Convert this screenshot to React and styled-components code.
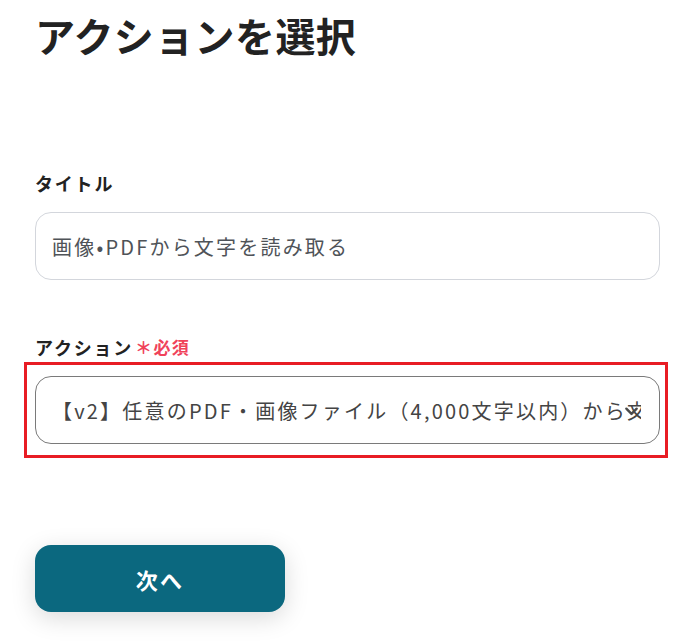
import styled, { createGlobalStyle } from 'styled-components'

const GlobalStyle = createGlobalStyle`
	body {
		margin: 0;
		background: #ffffff;
		font-family: "Noto Sans CJK JP", "Noto Sans", sans-serif;
		color: #222;
	}
`

function App() {
	return (
		<Page>
			<GlobalStyle />
			<Heading>アクションを選択</Heading>
			<Field>
				<Label>タイトル</Label>
				<TextBox>画像•PDFから文字を読み取る</TextBox>
			</Field>
			<Field $gap={54}>
				<Label>
					アクション
					<Required>＊必須</Required>
				</Label>
				<Highlight>
					<SelectBox>
						<SelectText>【v2】任意のPDF・画像ファイル（4,000文字以内）から文字を読み取る</SelectText>
						<Chevron viewBox="0 0 16 16">
							<path d="M2.5 5 L8 10.5 L13.5 5" fill="none" stroke="#4a4a4a" strokeWidth="2.6" strokeLinecap="round" strokeLinejoin="round" />
						</Chevron>
					</SelectBox>
				</Highlight>
			</Field>
			<NextButton type="button">次へ</NextButton>
		</Page>
	)
}

export default App

const Page = styled.div`
	width: 685px;
	height: 641px;
	padding: 0 25px 0 35px;
	box-sizing: border-box;
	display: flex;
	flex-direction: column;
	overflow: hidden;
`

const Heading = styled.h1`
	margin: 5px 0 0 0;
	font-size: 40px;
	font-weight: 700;
	line-height: 60px;
	color: #222;
	letter-spacing: 0.01em;
`

const Field = styled.div`
	display: flex;
	flex-direction: column;
	margin-top: ${(p) => p.$gap || 105}px;
`

const Label = styled.div`
	font-size: 18px;
	font-weight: 700;
	line-height: 26px;
	letter-spacing: 0.1em;
	color: #222;
	display: flex;
	align-items: center;
	margin-bottom: 16px;
`

const Required = styled.span`
	color: #f0425a;
	font-size: 17px;
	font-weight: 700;
	letter-spacing: 0.08em;
	margin-left: 2px;
`

const TextBox = styled.div`
	width: 625px;
	height: 68px;
	box-sizing: border-box;
	border: 1px solid #d3d6dc;
	border-radius: 16px;
	padding: 0 16px;
	display: flex;
	align-items: center;
	font-size: 20px;
	letter-spacing: 0.11em;
	color: #4f5358;
`

const Highlight = styled.div`
	margin: -14px 0 0 -11px;
	width: 644px;
	height: 96px;
	box-sizing: border-box;
	border: 3px solid #e81c24;
	padding: 11px 0 0 8px;
`

const SelectBox = styled.div`
	position: relative;
	width: 625px;
	height: 68px;
	box-sizing: border-box;
	border: 1px solid #7a7a7a;
	border-radius: 16px;
	padding: 0 18px 0 16px;
	display: flex;
	align-items: center;
	overflow: hidden;
`

const SelectText = styled.div`
	white-space: nowrap;
	overflow: hidden;
	font-size: 20px;
	letter-spacing: 0.11em;
	color: #444;
`

const Chevron = styled.svg`
	position: absolute;
	z-index: 1;
	right: 20px;
	top: 27px;
	width: 15px;
	height: 15px;
`

const NextButton = styled.button`
	margin-top: 87px;
	width: 250px;
	height: 67px;
	border: none;
	border-radius: 16px;
	background-color: #0b687f;
	color: #fff;
	font-family: "Noto Sans CJK JP", "Noto Sans", sans-serif;
	font-size: 22px;
	font-weight: 700;
	letter-spacing: 0.1em;
	box-shadow: 0 6px 24px rgba(0, 0, 0, 0.15);
	cursor: pointer;
`
